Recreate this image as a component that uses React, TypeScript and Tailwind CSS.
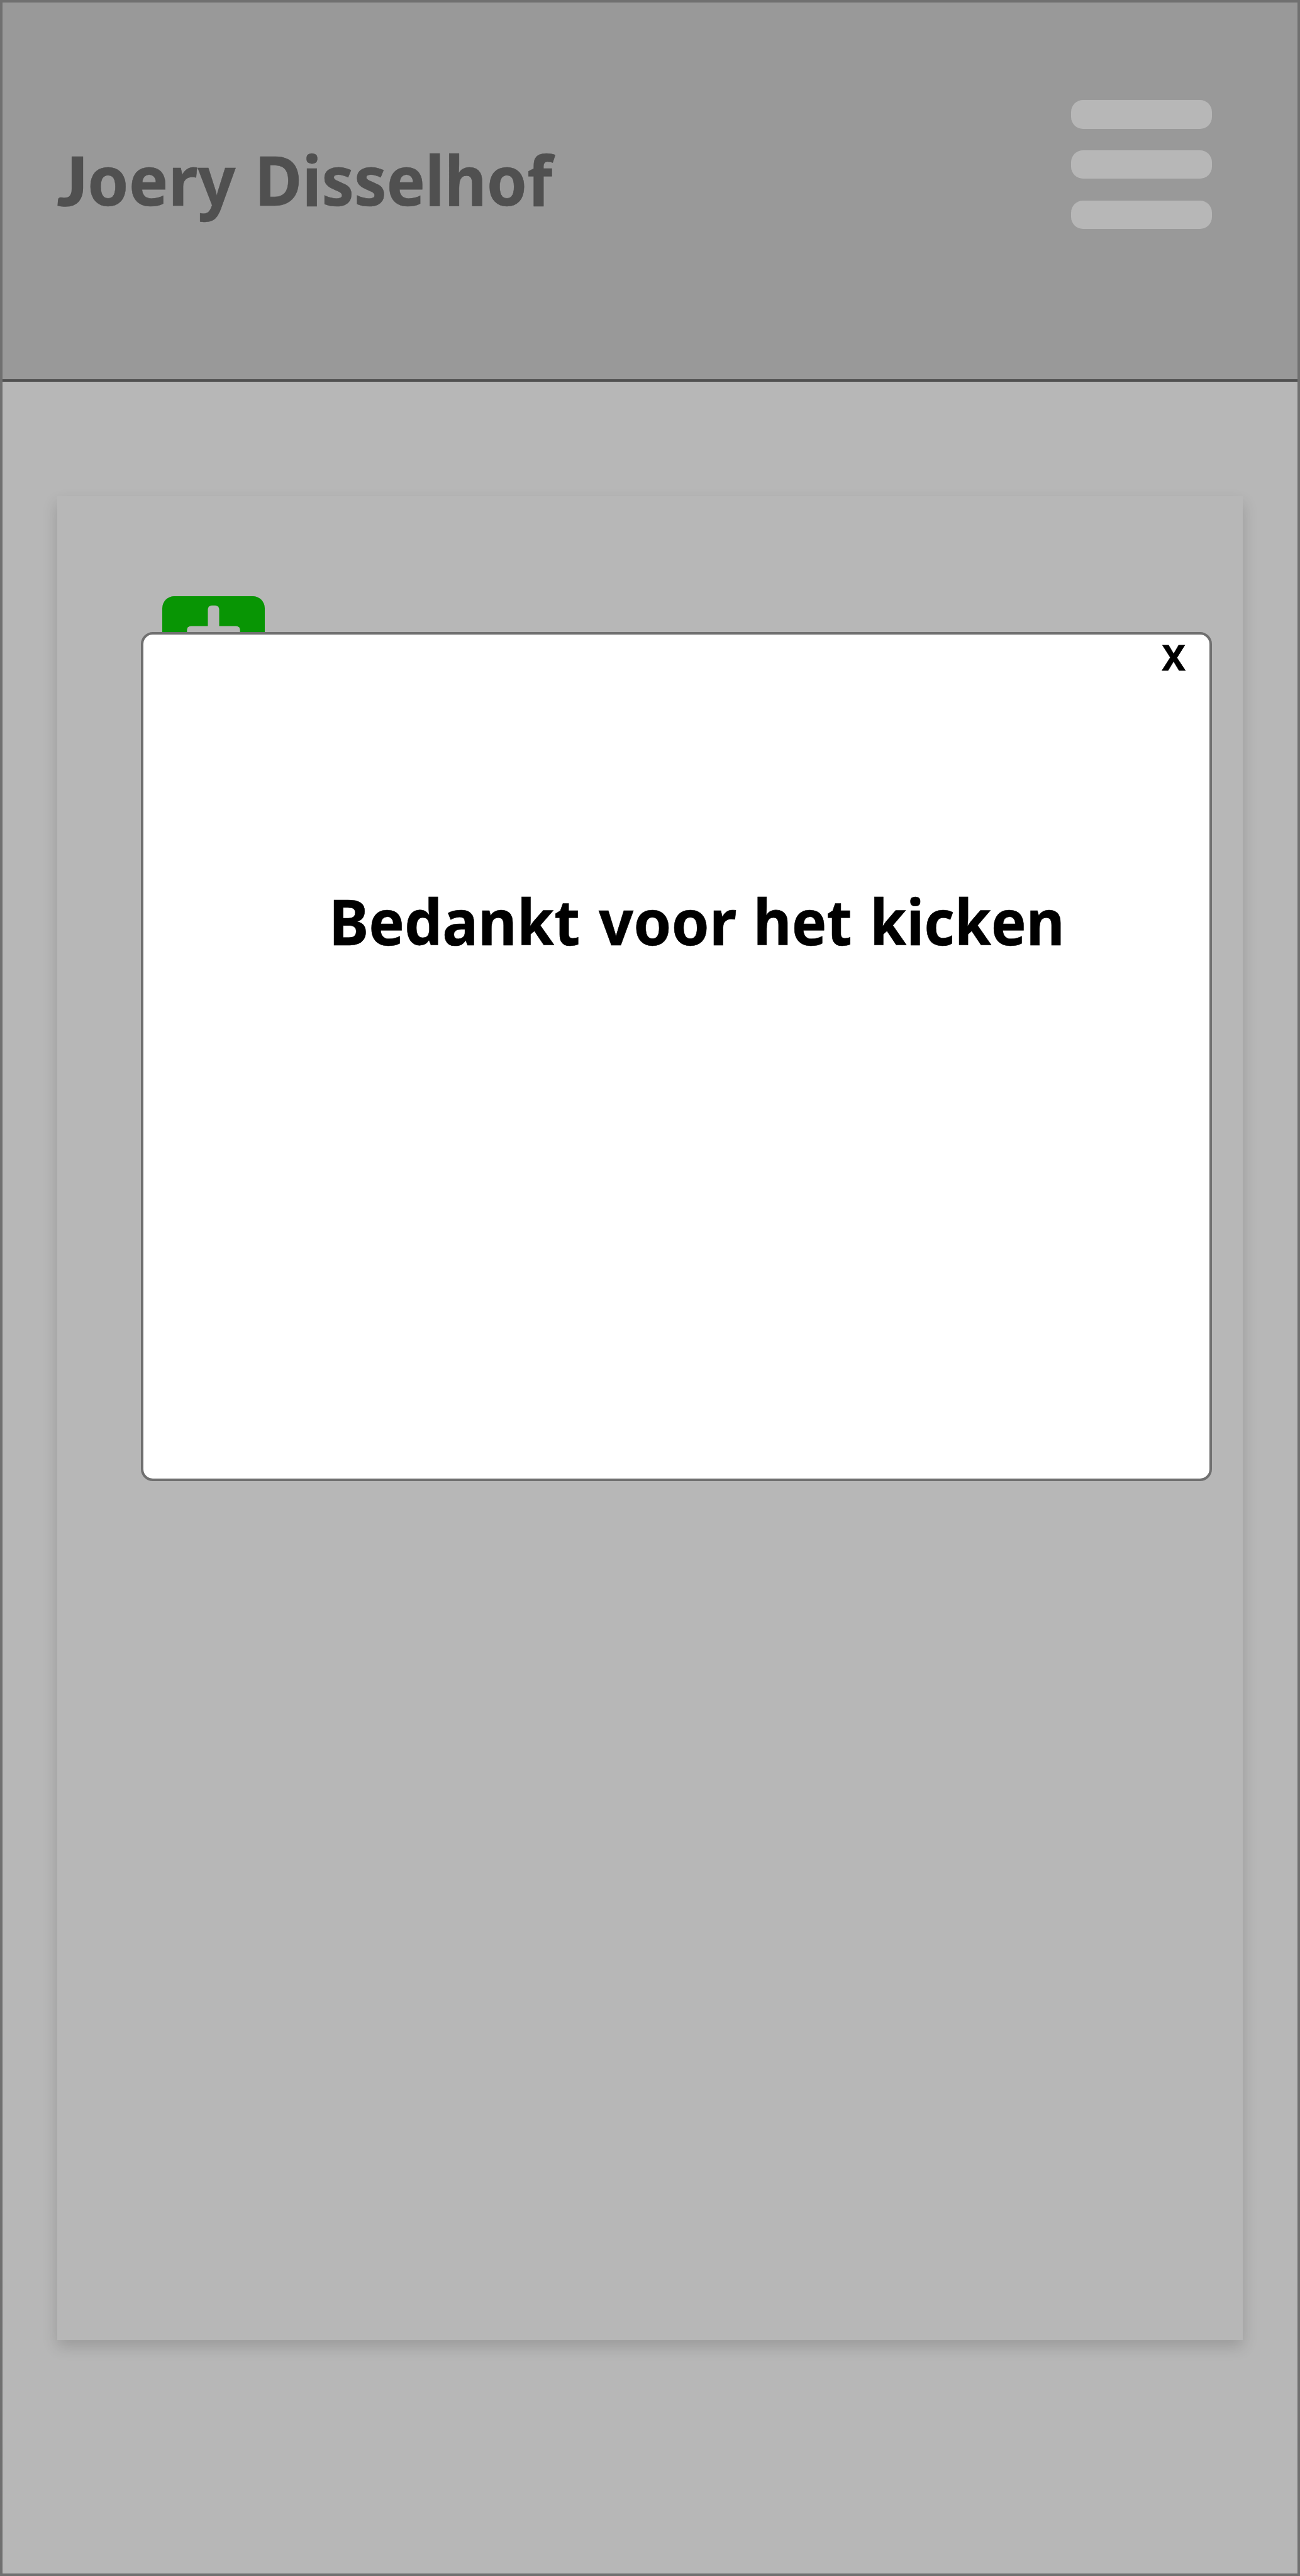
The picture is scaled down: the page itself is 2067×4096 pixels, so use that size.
function Header() {
  return (
    <header className="flex h-[603px] items-start justify-between border-b-4 border-[#505050] bg-[#999999] pl-[87px] pr-[136px]">
      <h1
        aria-label="Joery Disselhof"
        className="mt-[225.5px] flex items-baseline whitespace-nowrap font-['Noto_Sans',sans-serif] text-[109px] leading-none font-bold text-[#505050] [-webkit-text-stroke:0.6px_#505050]"
      >
        <span className="w-[48px]">
          <span className="inline-block origin-left scale-x-[1.04] font-['Lato',sans-serif] text-[107px] leading-none font-black [-webkit-text-stroke:1.5px_#505050]">J</span>
        </span>
        <span className="w-[265.6px]">
          <span className="inline-block origin-left scale-x-[0.965]">oery</span>
        </span>
        <span className="inline-block origin-left scale-x-[0.945]">Disselhof</span>
      </h1>
      <button type="button" aria-label="Menu" className="mt-[155.3px] flex w-[224px] flex-col gap-[34.15px]">
        <span className="h-[45.5px] w-full rounded-[19px] bg-[#b7b7b7]" />
        <span className="h-[45.5px] w-full rounded-[19px] bg-[#b7b7b7]" />
        <span className="h-[45.5px] w-full rounded-[19px] bg-[#b7b7b7]" />
      </button>
    </header>
  );
}

function AddIcon() {
  return (
    <svg viewBox="0 0 172 160" className="h-[151.7px] w-[163px]" aria-hidden="true">
      <rect width="172" height="160" rx="20" fill="#089504" />
      <rect x="76.5" y="15.5" width="19" height="89" rx="6.5" fill="#b7b7b7" />
      <rect x="41.5" y="50" width="89" height="20" rx="6.5" fill="#b7b7b7" />
    </svg>
  );
}

function Dialog() {
  return (
    <div
      role="dialog"
      className="absolute top-[1001px] left-[220px] flex h-[1350px] w-[1703px] flex-col rounded-[19px] border-4 border-[#707070] bg-white font-['Noto_Sans',sans-serif] font-bold text-black"
    >
      <button
        type="button"
        className="mt-[8.2px] mr-[38px] self-end text-[55.8px] leading-none font-bold [-webkit-text-stroke:0.8px_#000]"
      >
        X
      </button>
      <p className="mt-[341.8px] ml-[295.3px] flex text-[99.6px] leading-none whitespace-nowrap [-webkit-text-stroke:0.6px_#000]">
        <span className="w-[428.3px]">
          <span className="inline-block origin-left scale-x-[0.955]">Bedankt</span>
        </span>
        <span className="w-[246.3px]">
          <span className="inline-block origin-left scale-x-[0.97]">voor</span>
        </span>
        <span className="w-[184.8px]">
          <span className="inline-block origin-left scale-x-[0.937]">het</span>
        </span>
        <span className="inline-block origin-left scale-x-[0.942]">kicken</span>
      </p>
    </div>
  );
}

export default function App() {
  return (
    <div className="relative h-[4096px] w-[2067px] overflow-hidden border-4 border-[#707070] bg-[#b7b7b7]">
      <Header />
      <main className="mx-[87px] mt-[182px] h-[2931.5px] bg-[#b7b7b7] pt-[159.2px] pl-[167px] shadow-[0_11.4px_22.8px_rgba(0,0,0,0.16)]">
        <AddIcon />
      </main>
      <Dialog />
    </div>
  );
}
